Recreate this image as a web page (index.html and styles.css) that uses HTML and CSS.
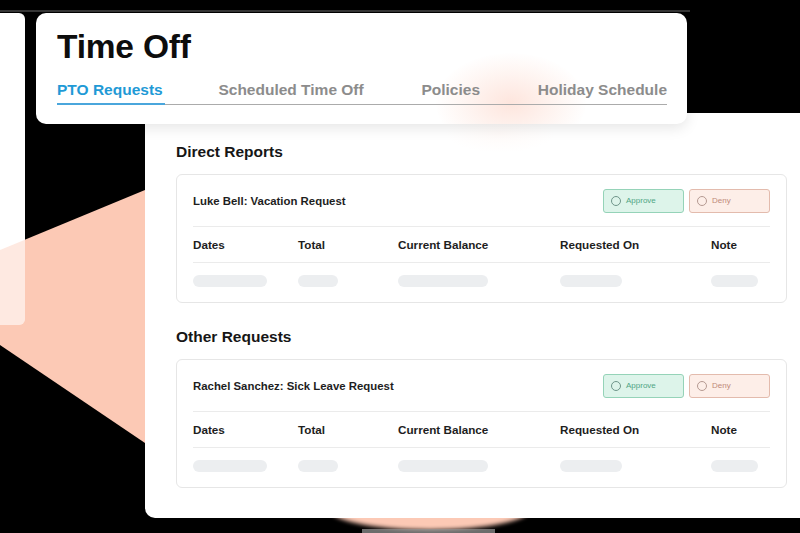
FILE: index.html
```html
<!DOCTYPE html>
<html>
<head>
    <title>Time Off</title>
    <link rel="stylesheet" href="styles.css">
</head>
<body>
    <div class="stage">
        <svg class="backdrop" width="800" height="533" viewBox="0 0 800 533">
            <defs>
                <clipPath id="side-clip">
                    <rect x="-10" y="13" width="35" height="312" rx="6"/>
                </clipPath>
                <filter id="soft" x="-50%" y="-50%" width="200%" height="200%">
                    <feGaussianBlur stdDeviation="2"/>
                </filter>
            </defs>
            <rect x="0" y="10" width="690" height="2" fill="#6b6b6b" opacity="0.5"/>
            <polygon points="-87,286 145,190 400,100 420,515 145,443" fill="#fcc9b5"/>
            <ellipse cx="430" cy="508" rx="102" ry="22" fill="#fcc9b5" filter="url(#soft)"/>
            <rect x="362" y="529" width="133" height="4" fill="#9a9a9a" opacity="0.7"/>
            <rect x="-10" y="13" width="35" height="312" rx="6" fill="#fff"/>
            <polygon points="-87,286 145,190 400,100 420,515 145,443" fill="#fcc9b5" opacity="0.4" clip-path="url(#side-clip)"/>
        </svg>

        <section class="panel">
            <div class="glow glow-panel"></div>

            <h2 class="section-title">Direct Reports</h2>
            <div class="request">
                <div class="request-top">
                    <span class="request-name">Luke Bell: Vacation Request</span>
                    <div class="actions">
                        <span class="btn approve"><i class="dot"></i>Approve</span>
                        <span class="btn deny"><i class="dot"></i>Deny</span>
                    </div>
                </div>
                <div class="cols head">
                    <span>Dates</span>
                    <span>Total</span>
                    <span>Current Balance</span>
                    <span>Requested On</span>
                    <span>Note</span>
                </div>
                <div class="cols skel">
                    <span><b style="width:74px"></b></span>
                    <span><b style="width:40px"></b></span>
                    <span><b style="width:90px"></b></span>
                    <span><b style="width:62px"></b></span>
                    <span><b style="width:47px"></b></span>
                </div>
            </div>

            <h2 class="section-title gap">Other Requests</h2>
            <div class="request">
                <div class="request-top">
                    <span class="request-name">Rachel Sanchez: Sick Leave Request</span>
                    <div class="actions">
                        <span class="btn approve"><i class="dot"></i>Approve</span>
                        <span class="btn deny"><i class="dot"></i>Deny</span>
                    </div>
                </div>
                <div class="cols head">
                    <span>Dates</span>
                    <span>Total</span>
                    <span>Current Balance</span>
                    <span>Requested On</span>
                    <span>Note</span>
                </div>
                <div class="cols skel">
                    <span><b style="width:74px"></b></span>
                    <span><b style="width:40px"></b></span>
                    <span><b style="width:90px"></b></span>
                    <span><b style="width:62px"></b></span>
                    <span><b style="width:47px"></b></span>
                </div>
            </div>
        </section>

        <header class="topcard">
            <div class="glow glow-head"></div>
            <h1>Time Off</h1>
            <nav class="tabs">
                <span class="tab active">PTO Requests</span>
                <span class="tab">Scheduled Time Off</span>
                <span class="tab">Policies</span>
                <span class="tab">Holiday Schedule</span>
            </nav>
        </header>
    </div>
</body>
</html>
```

FILE: styles.css
```css
html, body {
    margin: 0;
    background: #000;
}
body {
    font-family: "Liberation Sans", Arial, sans-serif;
    color: #1c1c1c;
}
.stage {
    position: relative;
    width: 800px;
    height: 533px;
    overflow: hidden;
}
.backdrop {
    position: absolute;
    left: 0;
    top: 0;
}

/* header window */
.topcard {
    position: absolute;
    left: 36px;
    top: 13px;
    width: 651px;
    height: 111px;
    box-sizing: border-box;
    padding: 15px 20px 0 21px;
    background: #fff;
    border-radius: 10px;
    box-shadow: 0 4px 14px rgba(0,0,0,0.10);
    overflow: hidden;
}
.topcard h1 {
    position: relative;
    margin: 0;
    font-size: 33.5px;
    line-height: 38px;
    font-weight: bold;
    color: #0d0d0d;
    letter-spacing: -0.2px;
}
.tabs {
    position: relative;
    display: flex;
    justify-content: space-between;
    margin-top: 14px;
    border-bottom: 1px solid #ababab;
}
.tab {
    font-size: 15.5px;
    line-height: 20px;
    font-weight: bold;
    color: #8c8c8c;
    padding-bottom: 3px;
}
.tab.active {
    color: #1f9ad6;
    border-bottom: 2px solid #4aa6dc;
    margin-bottom: -1px;
    margin-right: -4px;
    padding-right: 2px;
}

.glow {
    position: absolute;
    border-radius: 50%;
    pointer-events: none;
}
.glow-head {
    left: 400px;
    top: 40px;
    width: 150px;
    height: 100px;
    background: radial-gradient(ellipse at center, rgba(252,198,180,0.45) 0%, rgba(252,208,192,0.2) 45%, rgba(255,255,255,0) 72%);
}
.glow-panel {
    left: 300px;
    top: 0;
    width: 110px;
    height: 40px;
    background: radial-gradient(ellipse at center, rgba(252,215,200,0.12) 0%, rgba(255,255,255,0) 70%);
}

/* main window */
.panel {
    position: absolute;
    left: 145px;
    top: 113px;
    width: 680px;
    box-sizing: border-box;
    padding: 30px 38px 30px 31px;
    background: #fff;
    border-radius: 10px;
}
.section-title {
    position: relative;
    margin: 0 0 13px;
    font-size: 15.5px;
    line-height: 18px;
    font-weight: bold;
    color: #161616;
}
.section-title.gap {
    margin-top: 25px;
}
.request {
    position: relative;
    border: 1px solid #e6e6e6;
    border-radius: 6px;
    padding: 0 16px;
}
.request-top {
    display: flex;
    align-items: center;
    justify-content: space-between;
    height: 51px;
    border-bottom: 1px solid #ebebeb;
}
.request-name {
    font-size: 11.4px;
    font-weight: bold;
    color: #1e1e1e;
}
.actions {
    display: flex;
    gap: 5px;
}
.btn {
    display: flex;
    align-items: center;
    box-sizing: border-box;
    width: 81px;
    height: 24px;
    padding-left: 7px;
    border-radius: 3px;
    font-size: 8px;
}
.btn .dot {
    width: 8px;
    height: 8px;
    border-radius: 50%;
    margin-right: 5px;
}
.approve {
    background: #ddf4ea;
    border: 1px solid #95d3b8;
    color: #4fa585;
}
.approve .dot {
    border: 1px solid #6f968a;
}
.deny {
    background: #fdeee8;
    border: 1px solid #e3bbad;
    color: #c08a7a;
}
.deny .dot {
    border: 1px solid #b59a92;
}
.cols {
    display: grid;
    grid-template-columns: 105px 100px 162px 151px 1fr;
}
.head {
    height: 35px;
    align-items: center;
    border-bottom: 1px solid #ebebeb;
    font-size: 11.7px;
    font-weight: bold;
    color: #1e1e1e;
}
.skel {
    padding: 12px 0 15px;
}
.skel b {
    display: block;
    height: 12px;
    border-radius: 6px;
    background: #eceef0;
}
```
